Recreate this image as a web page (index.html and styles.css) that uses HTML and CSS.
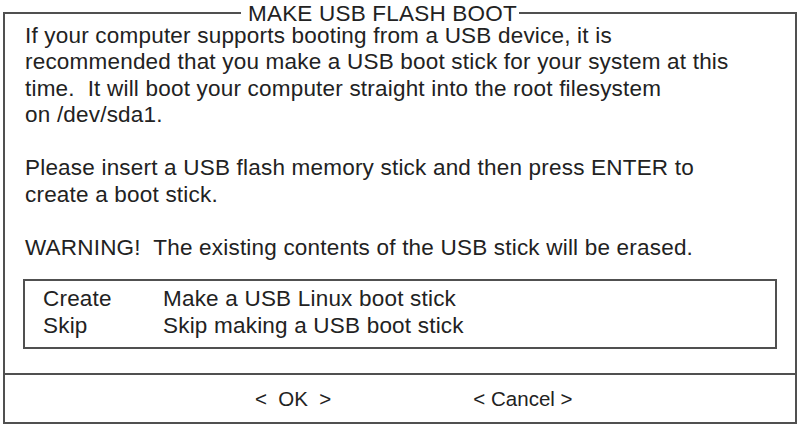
FILE: index.html
```html
<!DOCTYPE html>
<html lang="en">
<head>
<meta charset="utf-8">
<title>MAKE USB FLASH BOOT</title>
<link rel="stylesheet" href="styles.css">
</head>
<body>
<fieldset class="dialog">
  <legend class="dialog-title">MAKE USB FLASH BOOT</legend>
  <div class="dialog-body">
    <p class="message">If your computer supports booting from a USB device, it is<br>recommended that you make a USB boot stick for your system at this<br>time.&nbsp; It will boot your computer straight into the root filesystem<br>on /dev/sda1.</p>
    <p class="message">Please insert a USB flash memory stick and then press ENTER to<br>create a boot stick.</p>
    <p class="message">WARNING!&nbsp; The existing contents of the USB stick will be erased.</p>
    <div class="menu">
      <div class="menu-row"><span class="menu-tag">Create</span><span class="menu-item">Make a USB Linux boot stick</span></div>
      <div class="menu-row"><span class="menu-tag">Skip</span><span class="menu-item">Skip making a USB boot stick</span></div>
    </div>
  </div>
  <div class="dialog-buttons">
    <span class="button button-ok">&lt;&nbsp; OK &nbsp;&gt;</span>
    <span class="button button-cancel">&lt; Cancel &gt;</span>
  </div>
</fieldset>
</body>
</html>
```

FILE: styles.css
```css
html, body {
  margin: 0;
  padding: 0;
  background: #ffffff;
}

body {
  font-family: "Liberation Sans", Arial, sans-serif;
  font-size: 22.5px;
  letter-spacing: 0.2px;
  color: #222222;
  width: 800px;
  height: 426px;
  overflow: hidden;
}

.dialog {
  margin: 3.5px 3px 0 3px;
  padding: 0;
  border: 2px solid #505050;
  min-width: 0;
  height: 420.5px;
  box-sizing: border-box;
  display: flex;
  flex-direction: column;
}

.dialog-title {
  margin-left: 236px;
  padding: 0 2px 0 7px;
  line-height: 19px;
  font-size: 22.5px;
}

.dialog-body {
  flex: 1;
  padding: 0 0 0 20px;
  display: flex;
  flex-direction: column;
}

.message {
  margin: 0 0 26.6px 0;
  line-height: 26.6px;
  white-space: nowrap;
}

.message:nth-of-type(3) {
  margin-bottom: 17.5px;
}

.menu {
  border: 2px solid #505050;
  margin: 0 18px 0 -2px;
  padding: 4px 0 8px 18px;
}

.menu-row {
  display: flex;
  line-height: 27px;
}

.menu-tag {
  width: 120px;
}

.dialog-buttons {
  border-top: 2px solid #505050;
  height: 47px;
  display: flex;
  align-items: center;
  font-size: 20.5px;
  letter-spacing: 0;
}

.button {
  white-space: nowrap;
}

.button-ok {
  margin-left: 250px;
}

.button-cancel {
  margin-left: 142px;
}
```
